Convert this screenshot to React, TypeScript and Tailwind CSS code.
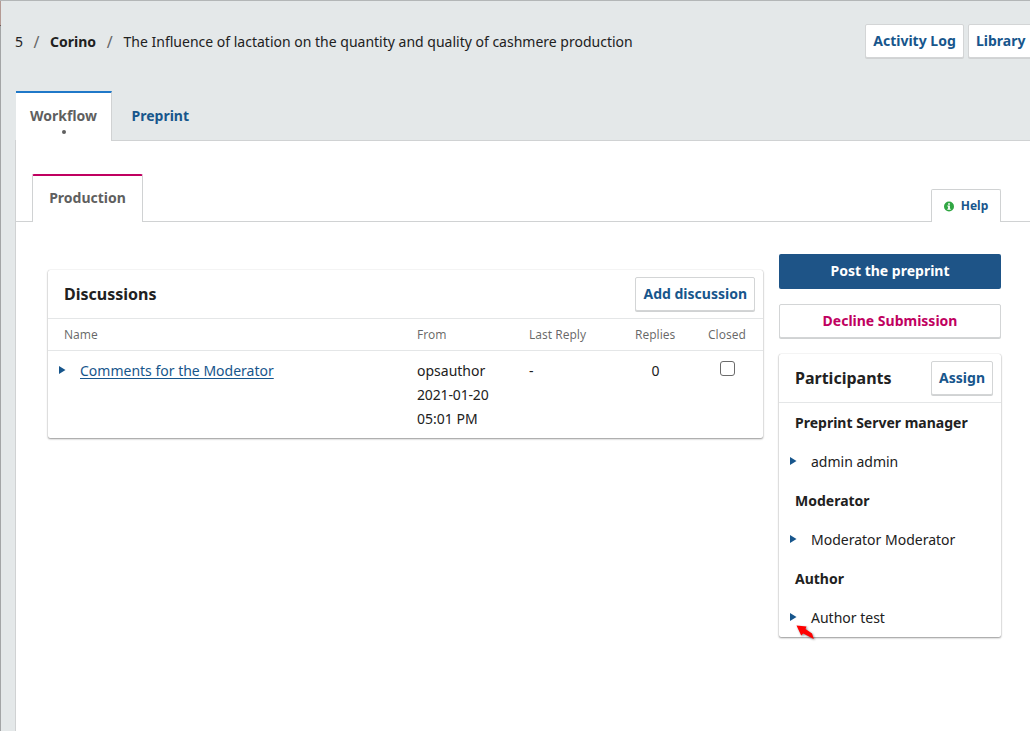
import type { ReactNode } from "react";
import { FaInfoCircle } from "react-icons/fa";

function Button({ children, className = "" }: { children: ReactNode; className?: string }) {
  return (
    <button
      className={`h-[34px] shrink-0 whitespace-nowrap rounded-[2px] border border-[#d3d5d6] bg-white px-[7px] text-[14px] leading-[32px] font-bold shadow-[0_1px_0_#d0d2d3] ${className}`}
    >
      {children}
    </button>
  );
}

function Caret() {
  return (
    <svg width="7" height="8" viewBox="0 0 7 8" className="-mt-[2px] shrink-0">
      <path d="M0 0 L6.5 4 L0 8 Z" fill="#17568c" />
    </svg>
  );
}

const card = "rounded-[2px] bg-white shadow-[0_0_1px_rgba(0,0,0,0.25),0_1px_2px_rgba(0,0,0,0.4)]";

function Discussions() {
  return (
    <section className={`mt-4 h-[168px] w-[715px] ${card}`}>
      <div className="flex h-[49px] items-center justify-between border-b border-[#e4e6e7] pr-2 pl-4">
        <h3 className="text-[16px] leading-6 font-bold">Discussions</h3>
        <Button className="text-[#17568c]">Add discussion</Button>
      </div>
      <div className="grid h-8 grid-cols-[369px_112px_106px_73px_55px] items-center border-b border-[#e4e6e7] text-[12px] text-black/60">
        <span className="pl-4">Name</span>
        <span>From</span>
        <span>Last Reply</span>
        <span>Replies</span>
        <span>Closed</span>
      </div>
      <div className="grid grid-cols-[369px_112px_106px_73px_55px] pt-2 leading-6">
        <div className="flex h-6 items-center pl-[11px]">
          <Caret />
          <a className="ml-[14px] text-[#17568c] underline underline-offset-2">Comments for the Moderator</a>
        </div>
        <div>
          <div>opsauthor</div>
          <div className="tracking-[-0.15px]">2021-01-20</div>
          <div>05:01 PM</div>
        </div>
        <div>-</div>
        <div className="w-[41px] text-center">0</div>
        <div className="pt-[2px] pl-3">
          <div className="size-[15px] rounded-[3px] border border-[#6b6b6b] bg-white" />
        </div>
      </div>
    </section>
  );
}

const participants = [
  { role: "Preprint Server manager", name: "admin admin" },
  { role: "Moderator", name: "Moderator Moderator" },
  { role: "Author", name: "Author test" },
];

function Participants() {
  return (
    <section className={`relative mt-4 h-[283px] ${card}`}>
      <div className="flex h-[49px] items-center justify-between border-b border-[#e4e6e7] pr-2 pl-4">
        <h3 className="text-[16px] leading-6 font-bold">Participants</h3>
        <Button className="text-[#17568c]">Assign</Button>
      </div>
      {participants.map((p) => (
        <div key={p.role}>
          <div className="h-[39px] pl-4 leading-10 font-bold">{p.role}</div>
          <div className="flex h-[39px] items-center pl-[11px]">
            <Caret />
            <span className="ml-[14px]">{p.name}</span>
          </div>
        </div>
      ))}
      <svg width="22" height="18" viewBox="0 0 22 18" className="absolute top-[270px] left-4 drop-shadow-[1px_1px_1px_rgba(0,0,0,0.45)]">
        <path d="M1.5 1.5 L11.5 2.5 L10.5 5 L17 9.5 L18.8 15 L8.2 9.5 L6.2 11.5 Z" fill="#ff0000" />
      </svg>
    </section>
  );
}

export default function App() {
  return (
    <div className="flex h-[731px] w-[1030px] overflow-hidden border-t border-t-[#b3b6b7] bg-[#e4e8e9] font-['Noto_Sans',sans-serif] text-[14px] text-[#212121]">
      <div className="w-px shrink-0 bg-[#a3a5a6]">
        <div className="h-[24px] bg-[#b49a94]" />
        <div className="h-px bg-[#6f5a56]" />
      </div>
      <div className="min-w-0 flex-1">
        <header className="flex h-[139px] flex-col justify-between">
          <div className="flex w-[1066px] items-center justify-between pt-[23px] pl-[14px]">
            <div className="flex items-center pt-px leading-5 whitespace-pre">
              <span>5</span>
              <span className="w-[27px] text-center text-[16px] text-[#666]">/</span>
              <span className="font-bold">Corino</span>
              <span className="w-[27.5px] text-center text-[16px] text-[#666]">/</span>
              <span>The Influence of lactation on the quantity and quality of cashmere production</span>
            </div>
            <div className="flex w-[202px] gap-1">
              <Button className="w-[99px] text-[#17568c]">Activity Log</Button>
              <Button className="text-[#17568c]">Library</Button>
            </div>
          </div>
          <nav className="flex h-[49px] pl-[15px] font-bold">
            <div className="z-10 flex h-[50px] w-24 flex-col items-center border-t-2 border-r border-t-[#1f78c8] border-r-[#d0d2d3] bg-white pt-[13px] text-[#5f5f5f]">
              <span className="leading-5">Workflow</span>
              <span className="mt-[4px] size-1 rounded-full bg-[#5f5f5f]" />
            </div>
            <a className="pt-[15px] pl-[19.5px] leading-5 text-[#17568c]">Preprint</a>
          </nav>
        </header>
        <main className="ml-[14px] h-[591px] border-t border-l border-[#d0d2d3] bg-white">
          <div className="flex h-[81px] items-end justify-between border-b border-[#d0d2d3] pr-[29px] pl-4">
            <div className="-mb-px h-[48px] w-[111px] rounded-t-[2px] border-x border-t-2 border-x-[#d0d2d3] border-t-[#c00060] bg-white text-center leading-[44px] font-bold text-[#5f5f5f]">
              Production
            </div>
            <div className="-mb-px flex h-[33px] w-[70px] items-center justify-center rounded-t-[2px] border border-b-0 border-[#d0d2d3] bg-white text-[12px] font-bold text-[#17568c]">
              <svg width="10" height="11" viewBox="0 0 10 11" className="mr-[7px]">
                <circle cx="5" cy="5.5" r="5" fill="#30a643" />
                <path d="M4.1 2.3h1.8v1.4H4.1z M3.3 4.5h2.6v3.3h.8v1H3.3v-1h.8V5.5h-.8z" fill="#fff" />
              </svg>
              Help
            </div>
          </div>
          <div className="flex gap-4 pt-8 pl-8">
            <Discussions />
            <aside className="w-[222px]">
              <button className="block h-[35px] w-full rounded-[2px] bg-[#1e5487] pb-[2px] font-bold text-white">Post the preprint</button>
              <Button className="mt-[15px] block w-full text-[#c00060]">Decline Submission</Button>
              <Participants />
            </aside>
          </div>
        </main>
      </div>
    </div>
  );
}
